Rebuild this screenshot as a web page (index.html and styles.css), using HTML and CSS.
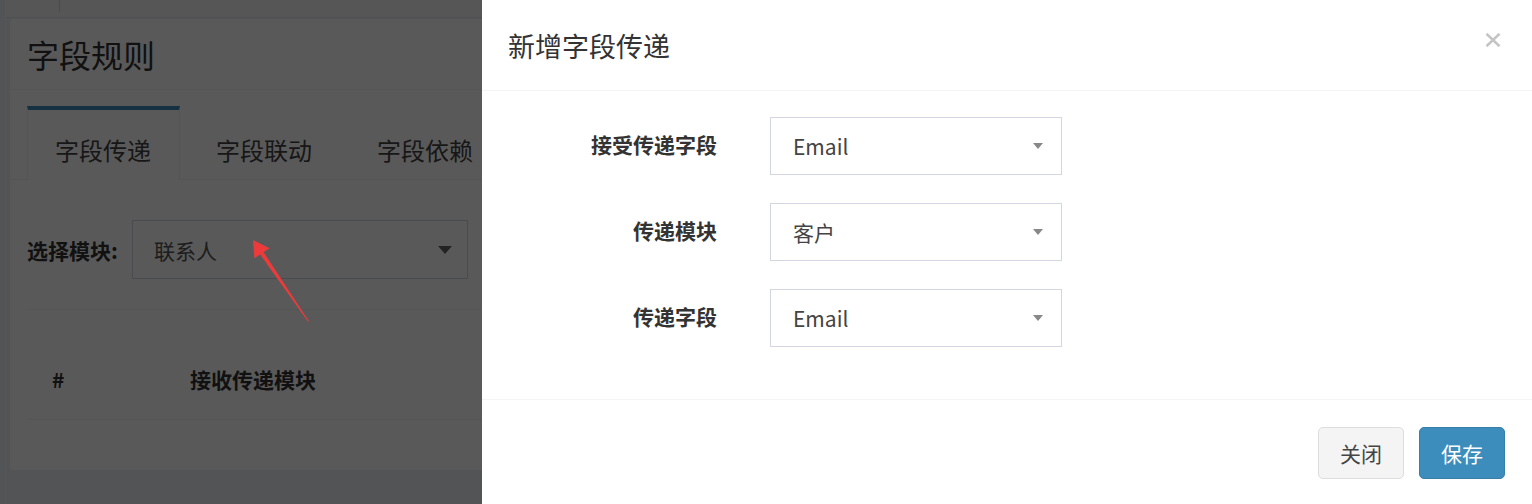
FILE: index.html
```html
<!DOCTYPE html>
<html lang="zh-CN">
<head>
<meta charset="utf-8">
<title>字段规则</title>
<link rel="stylesheet" href="styles.css">
</head>
<body>
<div class="page">
  <div class="topbar"><div class="toptab"></div></div>
  <div class="box">
    <div class="box-header"><h3 class="box-title">字段规则</h3></div>
    <div class="nav-tabs">
      <ul class="nav">
        <li class="tab active">字段传递</li>
        <li class="tab">字段联动</li>
        <li class="tab">字段依赖</li>
      </ul>
      <div class="tab-content">
        <div class="filter">
          <span class="filter-label">选择模块:</span>
          <div class="select select-lg"><span>联系人</span><span class="caret caret-lg"></span></div>
        </div>
        <div class="table">
          <div class="thead">
            <span class="th th-num">#</span>
            <span class="th th-mod">接收传递模块</span>
          </div>
        </div>
      </div>
    </div>
  </div>
</div>

<div class="backdrop"></div>

<svg class="annotation" width="1532" height="504" viewBox="0 0 1532 504" aria-hidden="true">
  <polygon points="253,240 269.4,248.3 263.6,252.2 308.9,321.2 308.1,321.8 260.2,254.4 254.4,258.3" fill="#ee3a3a"/>
</svg>

<div class="modal">
  <div class="modal-header">
    <h4 class="modal-title">新增字段传递</h4>
    <svg class="close" width="16" height="14" viewBox="0 0 16 14" aria-hidden="true">
      <path d="M1.5 0.8 L14.5 13.2 M14.5 0.8 L1.5 13.2" stroke="#c4c4c4" stroke-width="2.6" fill="none"/>
    </svg>
  </div>
  <div class="modal-body">
    <div class="form-row">
      <label class="form-label">接受传递字段</label>
      <div class="select"><span>Email</span><span class="caret"></span></div>
    </div>
    <div class="form-row">
      <label class="form-label">传递模块</label>
      <div class="select"><span>客户</span><span class="caret"></span></div>
    </div>
    <div class="form-row">
      <label class="form-label">传递字段</label>
      <div class="select"><span>Email</span><span class="caret"></span></div>
    </div>
  </div>
  <div class="modal-footer">
    <button class="btn btn-default">关闭</button>
    <button class="btn btn-primary">保存</button>
  </div>
</div>
</body>
</html>
```

FILE: styles.css
```css
* { box-sizing: border-box; }

html, body {
  margin: 0;
  padding: 0;
  width: 1532px;
  height: 504px;
  overflow: hidden;
}

body {
  background: #ecf0f5;
  font-family: "Noto Sans CJK SC", "Noto Sans", sans-serif;
  color: #333;
  position: relative;
}

.page {
  margin-left: 5px;
  height: 504px;
  border-left: 1px solid #f7f8fa;
}

.topbar {
  height: 18px;
  background: #f6f7f9;
  border-bottom: 1px solid #e4e6ea;
}

.toptab {
  width: 54px;
  height: 12px;
  border-right: 1px solid #d5d8dd;
}

.box {
  margin: 1px 0 0 4px;
  width: 1510px;
  height: 451px;
  background: #fff;
  border-radius: 4px;
}

.box-header {
  height: 71px;
  border-bottom: 1px solid #f4f4f4;
  padding-left: 17px;
  display: flex;
  align-items: center;
}

.box-title {
  margin: 0;
  font-size: 32px;
  font-weight: 400;
  color: #333;
  line-height: 1;
}

.nav {
  list-style: none;
  margin: 0;
  padding: 16px 0 0 17px;
  display: flex;
  gap: 8px;
  border-bottom: 1px solid #f4f4f4;
}

.tab {
  width: 153px;
  height: 74px;
  padding: 8px 0 0 28px;
  border-top: 4px solid transparent;
  display: flex;
  align-items: center;
  font-size: 24px;
  color: #444;
  margin-bottom: -1px;
}

.tab.active {
  border-top-color: #3c8dbc;
  border-left: 1px solid #f4f4f4;
  border-right: 1px solid #f4f4f4;
  padding-left: 27px;
  background: #fff;
}

.tab-content {
  padding: 40px 0 0 17px;
}

.filter {
  display: flex;
  align-items: center;
}

.filter-label {
  width: 105px;
  font-size: 21px;
  font-weight: 700;
  color: #333;
}

.select {
  width: 292px;
  height: 58px;
  border: 1px solid #d2d6de;
  display: flex;
  align-items: center;
  justify-content: space-between;
  padding: 0 18px 0 22px;
  font-size: 21px;
  color: #444;
  background: #fff;
}

.select-lg {
  width: 336px;
  height: 59px;
  padding: 0 15px 0 21px;
  color: #555;
}

.caret {
  width: 0;
  height: 0;
  border-left: 5px solid transparent;
  border-right: 5px solid transparent;
  border-top: 6px solid #888;
}

.caret-lg {
  border-left-width: 7px;
  border-right-width: 7px;
  border-top: 8px solid #666;
}

.table {
  margin-top: 30px;
  border-top: 1px solid #f4f4f4;
  padding-top: 30px;
}

.thead {
  height: 80px;
  border-bottom: 1px solid #f4f4f4;
  display: flex;
  align-items: center;
  padding-bottom: 2px;
}

.th {
  font-size: 21px;
  font-weight: 700;
  color: #333;
}

.th-num {
  padding-left: 25px;
  width: 163px;
}

.backdrop {
  position: fixed;
  inset: 0;
  background: rgba(0, 0, 0, 0.65);
}

.annotation {
  position: fixed;
  left: 0;
  top: 0;
}

.modal {
  position: fixed;
  left: 482px;
  top: 0;
  width: 1050px;
  height: 504px;
  background: #fff;
}

.modal-header {
  height: 91px;
  border-bottom: 1px solid #f4f4f4;
  padding: 0 31px 0 26px;
  display: flex;
  align-items: center;
  justify-content: space-between;
}

.modal-title {
  margin: 0;
  font-size: 27px;
  font-weight: 400;
  color: #333;
  line-height: 1;
}

.close {
  margin-top: -10px;
}

.modal-body {
  padding: 26px 0 52px;
  display: flex;
  flex-direction: column;
  gap: 28px;
  border-bottom: 1px solid #f4f4f4;
}

.form-row {
  display: flex;
  align-items: center;
}

.form-label {
  width: 235px;
  text-align: right;
  margin-right: 53px;
  font-size: 21px;
  font-weight: 700;
  color: #333;
  padding-bottom: 4px;
}

.modal-footer {
  display: flex;
  justify-content: flex-end;
  gap: 15px;
  padding: 27px 27px 0 0;
}

.btn {
  width: 86px;
  height: 52px;
  border-radius: 5px;
  font-family: inherit;
  font-size: 21px;
  display: flex;
  align-items: center;
  justify-content: center;
  padding: 0;
}

.btn-default {
  background: #f4f4f4;
  border: 1px solid #ddd;
  color: #444;
}

.btn-primary {
  background: #3c8dbc;
  border: 1px solid #367fa9;
  color: #fff;
}
```
